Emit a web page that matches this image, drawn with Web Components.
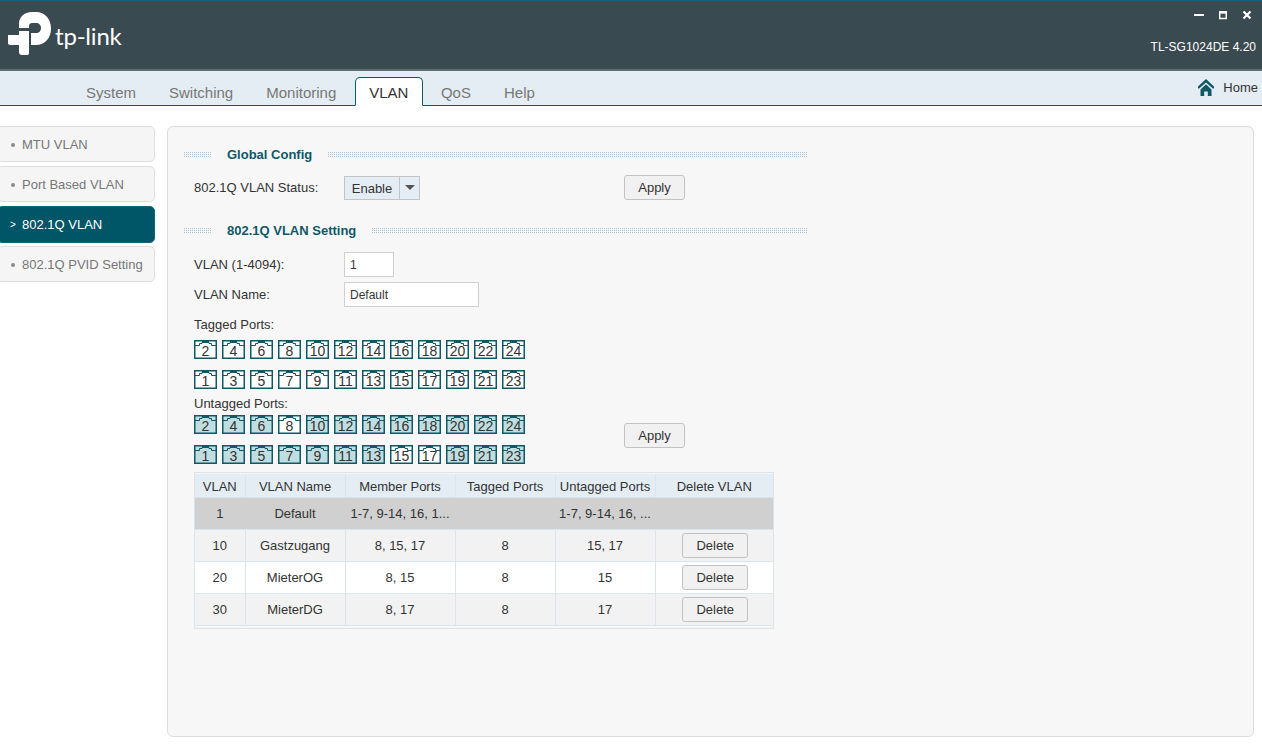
<!DOCTYPE html>
<html>
<head>
<meta charset="utf-8">
<title>TL-SG1024DE</title>
<style>
html,body{margin:0;padding:0;height:100%;background:#fff;overflow:hidden;}
body{font:13px "Liberation Sans",Arial,sans-serif;color:#333;}
</style>
</head>
<body>
<tp-header model="TL-SG1024DE 4.20"></tp-header>
<tp-nav active="VLAN" items="System,Switching,Monitoring,VLAN,QoS,Help"></tp-nav>
<tp-page>
	<tp-sidemenu slot="side" active="802.1Q VLAN" items="MTU VLAN,Port Based VLAN,802.1Q VLAN,802.1Q PVID Setting"></tp-sidemenu>
	<tp-section>Global Config</tp-section>
	<tp-row style="margin-top:12px">
		<span slot="label">802.1Q VLAN Status:</span>
		<tp-select value="Enable"></tp-select>
		<tp-button slot="action">Apply</tp-button>
	</tp-row>
	<tp-section style="margin-top:22px">802.1Q VLAN Setting</tp-section>
	<tp-row style="margin-top:13px">
		<span slot="label">VLAN (1-4094):</span>
		<tp-input value="1" size="50"></tp-input>
	</tp-row>
	<tp-row style="margin-top:5px">
		<span slot="label">VLAN Name:</span>
		<tp-input value="Default" size="135"></tp-input>
	</tp-row>
	<tp-ports style="margin-top:10px"></tp-ports>
	<tp-vlan-table></tp-vlan-table>
</tp-page>

<script>
(function() {
	const FONT = '"Liberation Sans",Arial,sans-serif';

	function shadow(el, html) {
		el.attachShadow({mode: 'open'}).innerHTML = html;
	}

	class TpHeader extends HTMLElement {
		connectedCallback() {
			shadow(this, `
				<style>
				:host{display:flex;justify-content:space-between;height:68px;background:#3a4a51;border-top:1px solid #1b5b7d;border-bottom:2px solid #5f6d73;font-family:${FONT};color:#fff;}
				.logo{display:flex;align-items:center;margin:10px 0 0 8px;height:46px;}
				.logo span{font:400 24px Lato,"Open Sans",sans-serif;margin:2px 0 0 3px;letter-spacing:-.2px;}
				.right{display:flex;flex-direction:column;align-items:flex-end;padding-right:6px;}
				.win{display:flex;gap:14px;margin:8px 4px 0 0;height:12px;align-items:center;}
				.model{font-size:12px;margin-top:19px;}
				svg{display:block;}
				</style>
				<div class="logo">
					<svg width="44" height="44" viewBox="8 12 44 44"><path fill="#fff" d="M19 28V24C19 17 24 12 32 12H36C45 12 51 19 51 28.500C51 38 45 45 36 45H31V33H36C39 33 41 31 41 28C41 25 39 23 36 23H32C30.500 23 29 24 29 26V28Z"/><path fill="#fff" d="M19 31H29V53C29 54.500 28 55 27 55H22C20 55 19 54 19 52V45H10C8.800 45 8 44 8 43V35H19Z"/></svg>
					<span>tp-link</span>
				</div>
				<div class="right">
					<div class="win">
						<svg width="10" height="10" viewBox="0 0 10 10"><rect x="0" y="4" width="10" height="2" fill="#fff"/></svg>
						<svg width="10" height="10" viewBox="0 0 10 10"><path fill="none" stroke="#fff" stroke-width="1.500" d="M1.750 2.500h6.500v6H1.750z"/><rect x="1" y="1" width="8" height="2.500" fill="#fff"/></svg>
						<svg width="10" height="10" viewBox="0 0 10 10"><path stroke="#fff" stroke-width="2.200" d="M1.500 1.500l7 7M8.500 1.500l-7 7"/></svg>
					</div>
					<div class="model">${this.getAttribute('model')}</div>
				</div>
			`);
		}
	}

	class TpNav extends HTMLElement {
		connectedCallback() {
			const active = this.getAttribute('active');
			const tabs = this.getAttribute('items').split(',').map((name) => {
				return `<a class="${name === active ? 'on' : ''}">${name}</a>`;
			}).join('');
			shadow(this, `
				<style>
				:host{display:flex;justify-content:space-between;height:34px;background:#e4edf3;border-bottom:1px solid #0f5866;font-family:${FONT};}
				.tabs{display:flex;align-items:flex-end;padding-left:69.500px;}
				a{display:block;padding:0 16.500px;font-size:15px;line-height:31px;height:28px;color:#777;box-sizing:border-box;}
				a.on{margin:0 1.500px 0 2px;padding:0 13.500px;height:29px;line-height:30px;margin-bottom:-1px;color:#333;background:#fff;border:1px solid #0f5866;border-bottom:1px solid #fff;border-radius:5px 5px 0 0;position:relative;z-index:1;}
				.home{display:flex;align-items:center;gap:9px;padding:0 4px 0 0;margin-top:-1px;color:#333;font-size:13px;}
				</style>
				<div class="tabs">${tabs}</div>
				<div class="home">
					<svg width="16" height="17" viewBox="0 0 16 17"><path fill="#0f5866" d="M8 0L0 7.500V9.500H1.200L8 3.400 14.800 9.500H16V7.500zM2.500 10.500V17H6.200V12.500H9.800V17H13.500V10.500L8 5.300z"/></svg>
					<span>Home</span>
				</div>
			`);
		}
	}

	class TpPage extends HTMLElement {
		connectedCallback() {
			shadow(this, `
				<style>
				:host{display:flex;align-items:flex-start;gap:12px;padding:20px 8px 0 0;}
				.panel{box-sizing:border-box;flex:1;height:611px;background:#f7f7f7;border:1px solid #dcdcdc;border-radius:6px;padding:19px 0 0 15px;}
				</style>
				<slot name="side"></slot>
				<div class="panel"><slot></slot></div>
			`);
		}
	}

	class TpSidemenu extends HTMLElement {
		connectedCallback() {
			const active = this.getAttribute('active');
			const rows = this.getAttribute('items').split(',').map((name) => {
				const on = name === active;
				return `<div class="item ${on ? 'on' : ''}"><span class="mark">${on ? '&gt;' : ''}</span>${name}</div>`;
			}).join('');
			shadow(this, `
				<style>
				:host{display:block;width:155px;font-family:${FONT};}
				.item{box-sizing:border-box;display:flex;align-items:center;height:36px;margin:0 0 4px -3px;background:#f5f5f5;border:1px solid #dedede;border-radius:5px;color:#777;font-size:13px;}
				.mark{width:24px;flex:none;display:flex;justify-content:center;box-sizing:border-box;padding-left:6px;font-size:10px;}
				.mark:empty::before{content:"";width:4px;height:4px;margin:1px 0 0;background:#8a8a8a;border-radius:50%;}
				.on{height:37px;margin-bottom:3px;background:#005566;border-color:#0a6b7c;color:#fff;}
				</style>
				${rows}
			`);
		}
	}

	class TpSection extends HTMLElement {
		connectedCallback() {
			shadow(this, `
				<style>
				:host{display:flex;align-items:center;width:624px;height:17px;font:bold 13px ${FONT};color:#0f5866;}
				i{display:block;height:6px;background-image:conic-gradient(#a9c4d8 25%,transparent 0);background-size:2px 2px;}
				.a{width:29px;margin-right:15px;}
				.b{flex:1;margin-left:15px;}
				</style>
				<i class="a"></i><slot></slot><i class="b"></i>
			`);
		}
	}

	class TpRow extends HTMLElement {
		connectedCallback() {
			shadow(this, `
				<style>
				:host{display:grid;grid-template-columns:150px 280px auto;align-items:center;justify-items:start;padding-left:11px;width:500px;font:13px ${FONT};color:#333;}
				</style>
				<slot name="label"></slot><div><slot></slot></div><slot name="action"></slot>
			`);
		}
	}

	class TpSelect extends HTMLElement {
		connectedCallback() {
			shadow(this, `
				<style>
				:host{display:flex;box-sizing:border-box;width:76px;height:24px;border:1px solid #c4c4c4;background:#e4edf3;font:13px ${FONT};color:#333;}
				.v{width:54px;border-right:1px solid #c4c4c4;text-align:center;line-height:23px;}
				.c{flex:1;display:flex;align-items:center;justify-content:center;}
				.c::before{content:"";border:5px solid transparent;border-top:5px solid #555;border-bottom:0;}
				</style>
				<div class="v">${this.getAttribute('value')}</div><div class="c"></div>
			`);
		}
	}

	class TpInput extends HTMLElement {
		connectedCallback() {
			shadow(this, `
				<style>
				:host{display:block;}
				input{display:block;box-sizing:border-box;width:${this.getAttribute('size')}px;height:25px;border:1px solid #d0d0d0;background:#fff;padding:0 5px;margin:0;outline:0;font:12px ${FONT};color:#333;}
				</style>
				<input type="text" value="${this.getAttribute('value')}">
			`);
		}
	}

	class TpButton extends HTMLElement {
		connectedCallback() {
			shadow(this, `
				<style>
				:host{display:inline-block;}
				button{display:block;box-sizing:border-box;width:var(--btn-w,61px);height:25px;padding:0;border:1px solid #c2c2c2;border-radius:3px;background:#f1f1f1;font:13px ${FONT};color:#333;}
				</style>
				<button><slot></slot></button>
			`);
		}
	}

	class TpPort extends HTMLElement {
		connectedCallback() {
			const on = this.hasAttribute('on');
			shadow(this, `
				<style>
				:host{display:block;position:relative;width:23px;height:19px;font:14px/20px ${FONT};color:#333;}
				svg{position:absolute;left:0;top:0;}
				span{position:relative;display:block;text-align:center;padding-top:1px;}
				</style>
				<svg width="23" height="19" viewBox="0 0 23 19"><rect x=".75" y=".75" width="21.500" height="17.500" fill="${on ? '#c0dee0' : '#fff'}" stroke="#0f5866" stroke-width="1.500"/><path d="M1 5.500H5.500V3.500H8V2.500H15V3.500H17.500V5.500H22" fill="none" stroke="#0f5866"/><rect x="8" y="1" width="7" height="2" fill="#0f5866"/></svg>
				<span>${this.getAttribute('n')}</span>
			`);
		}
	}

	class TpPortGroup extends HTMLElement {
		connectedCallback() {
			const member = (this.getAttribute('on') || '').split(',');
			const cell = (n) => {
				return `<tp-port n="${n}" ${member.indexOf(String(n)) !== -1 ? 'on' : ''}></tp-port>`;
			};
			let top = '', bottom = '';
			for (let n = 2; n <= 24; n += 2) {
				top += cell(n);
				bottom += cell(n - 1);
			}
			shadow(this, `
				<style>
				:host{display:grid;grid-template-columns:repeat(12,23px);column-gap:5px;row-gap:11px;}
				</style>
				${top}${bottom}
			`);
		}
	}

	class TpPorts extends HTMLElement {
		connectedCallback() {
			const untagged = '1,2,3,4,5,6,7,9,10,11,12,13,14,16,18,19,20,21,22,23,24';
			shadow(this, `
				<style>
				:host{display:flex;align-items:flex-end;padding-left:11px;font:13px ${FONT};color:#333;}
				.l{line-height:15px;}
				.block{width:430px;}
				.action{margin-bottom:16px;}
				tp-port-group{margin-top:8px;}
				.u{margin-top:7px;}
				.u + tp-port-group{margin-top:4px;}
				</style>
				<div class="block">
					<div class="l">Tagged Ports:</div>
					<tp-port-group></tp-port-group>
					<div class="l u">Untagged Ports:</div>
					<tp-port-group on="${untagged}"></tp-port-group>
				</div>
				<div class="action"><tp-button>Apply</tp-button></div>
			`);
		}
	}

	class TpVlanTable extends HTMLElement {
		connectedCallback() {
			const rows = [
				['1', 'Default', '1-7, 9-14, 16, 1...', '', '1-7, 9-14, 16, ...', false],
				['10', 'Gastzugang', '8, 15, 17', '8', '15, 17', true],
				['20', 'MieterOG', '8, 15', '8', '15', true],
				['30', 'MieterDG', '8, 17', '8', '17', true]
			];
			const body = rows.map((r) => {
				const del = r[5] ? '<tp-button style="--btn-w:66px;margin-left:2px">Delete</tp-button>' : '';
				return `<tr>${r.slice(0, 5).map((c) => `<td>${c}</td>`).join('')}<td>${del}</td></tr>`;
			}).join('');
			shadow(this, `
				<style>
				:host{display:block;box-sizing:border-box;width:580px;height:157px;margin:8px 0 0 11px;border:1px solid #dbe4ea;padding:1px 0 0 0;font:13px ${FONT};color:#333;}
				table{border-collapse:collapse;table-layout:fixed;width:578px;}
				th,td{padding:0;text-align:center;border-right:1px solid #dbe4ea;border-bottom:1px solid #dbe4ea;overflow:hidden;white-space:nowrap;}
				th:last-child,td:last-child{border-right:0;}
				th{height:21px;padding-top:2px;background:#e4edf3;font-weight:400;}
				td{height:31px;vertical-align:middle;}
				tbody tr:nth-child(1) td{background:#d0d0d0;border-right-color:#d0d0d0;}
				tbody tr:nth-child(2) td,tbody tr:nth-child(4) td{background:#f2f2f2;}
				tbody tr:nth-child(3) td{background:#fff;}
				tp-button{vertical-align:middle;}
				</style>
				<table>
					<colgroup><col style="width:50px"><col style="width:100px"><col style="width:110px"><col style="width:100px"><col style="width:100px"><col></colgroup>
					<thead><tr><th>VLAN</th><th>VLAN Name</th><th>Member Ports</th><th>Tagged Ports</th><th>Untagged Ports</th><th>Delete VLAN</th></tr></thead>
					<tbody>${body}</tbody>
				</table>
			`);
		}
	}

	customElements.define('tp-header', TpHeader);
	customElements.define('tp-nav', TpNav);
	customElements.define('tp-page', TpPage);
	customElements.define('tp-sidemenu', TpSidemenu);
	customElements.define('tp-section', TpSection);
	customElements.define('tp-row', TpRow);
	customElements.define('tp-select', TpSelect);
	customElements.define('tp-input', TpInput);
	customElements.define('tp-button', TpButton);
	customElements.define('tp-port', TpPort);
	customElements.define('tp-port-group', TpPortGroup);
	customElements.define('tp-ports', TpPorts);
	customElements.define('tp-vlan-table', TpVlanTable);
})();
</script>
</body>
</html>
